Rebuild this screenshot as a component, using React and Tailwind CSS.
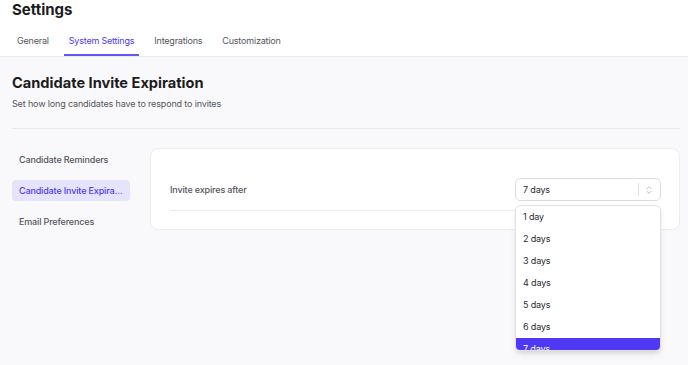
import { ChevronsUpDown } from "lucide-react";

const tabs = ["General", "System Settings", "Integrations", "Customization"];
const sideItems = ["Candidate Reminders", "Candidate Invite Expiration", "Email Preferences"];
const options = ["1 day", "2 days", "3 days", "4 days", "5 days", "6 days", "7 days"];

function App() {
  return (
    <div className="min-h-screen bg-[#f9f9fb] font-['Inter',sans-serif] text-[#1f1f23]">
      <header className="border-b border-[#ececf0] bg-white">
        <h1 className="px-3 text-[15px] font-bold leading-5 text-[#1c1c20]">Settings</h1>
        <nav className="flex gap-[10px] px-3">
          {tabs.map((tab) => (
            <div
              key={tab}
              className={
                tab === "System Settings"
                  ? "border-b-2 border-[#6259f0] px-[5px] pt-[14px] pb-[6px] text-[9px] leading-[14px] tracking-[-0.2px] text-[#4f39f6]"
                  : "border-b-2 border-transparent px-[5px] pt-[14px] pb-[6px] text-[9px] leading-[14px] tracking-[-0.2px] text-[#55555d]"
              }
            >
              {tab}
            </div>
          ))}
        </nav>
      </header>

      <main className="pl-3 pr-[8px] pt-[16px]">
        <h2 className="text-[14.6px] font-bold leading-5 text-[#1c1c20]">Candidate Invite Expiration</h2>
        <p className="mt-[4px] text-[9px] leading-[14px] tracking-[-0.15px] text-[#55555c]">Set how long candidates have to respond to invites</p>
        <div className="mt-[17px] border-t border-[#e8e8ec]" />

        <div className="mt-[19px] flex items-start gap-[20px]">
          <aside className="flex w-[118px] shrink-0 flex-col gap-[10px] pt-px">
            {sideItems.map((item) => (
              <div
                key={item}
                className={
                  item === "Candidate Invite Expiration"
                    ? "h-[21px] truncate rounded-[4px] bg-[#e5e4fc] px-[7px] text-[9px] font-medium leading-[21px] tracking-[-0.15px] text-[#4f39f6]"
                    : "h-[21px] truncate px-[7px] text-[9px] font-medium leading-[21px] tracking-[-0.15px] text-[#55555d]"
                }
              >
                {item}
              </div>
            ))}
          </aside>

          <section className="flex-1 rounded-[8px] border border-[#ededf0] bg-white pl-[19px] pr-[18px] pt-[29px] pb-[18px]">
            <div className="flex items-center justify-between border-b border-[#ececf0] pb-[9px]">
              <span className="text-[9px] font-medium tracking-[-0.15px] text-[#55555c]">Invite expires after</span>
              <div className="relative">
                <div className="flex h-[23px] w-[146px] items-center rounded-[5px] border border-[#dcdce1] bg-white pl-[7px] pr-[6px]">
                  <span className="flex-1 text-[9px] tracking-[-0.15px] text-[#2a2a30]">7 days</span>
                  <span className="mr-[5px] h-[13px] w-px bg-[#e2e2e6]" />
                  <ChevronsUpDown size={10} strokeWidth={1.5} className="text-[#9a9aa2]" />
                </div>
                <div className="absolute left-0 top-[27px] z-10 h-[146px] w-[146px] overflow-hidden rounded-[5px] border border-[#e2e2e6] bg-white shadow-md">
                  {options.map((opt) => (
                    <div
                      key={opt}
                      className={
                        opt === "7 days"
                          ? "h-[22px] bg-[#4f39f6] px-[7px] text-[9px] leading-[22px] tracking-[-0.15px] text-white"
                          : "h-[22px] px-[7px] text-[9px] leading-[22px] tracking-[-0.15px] text-[#2a2a30]"
                      }
                    >
                      {opt}
                    </div>
                  ))}
                </div>
              </div>
            </div>
          </section>
        </div>
      </main>
    </div>
  );
}

export default App;
